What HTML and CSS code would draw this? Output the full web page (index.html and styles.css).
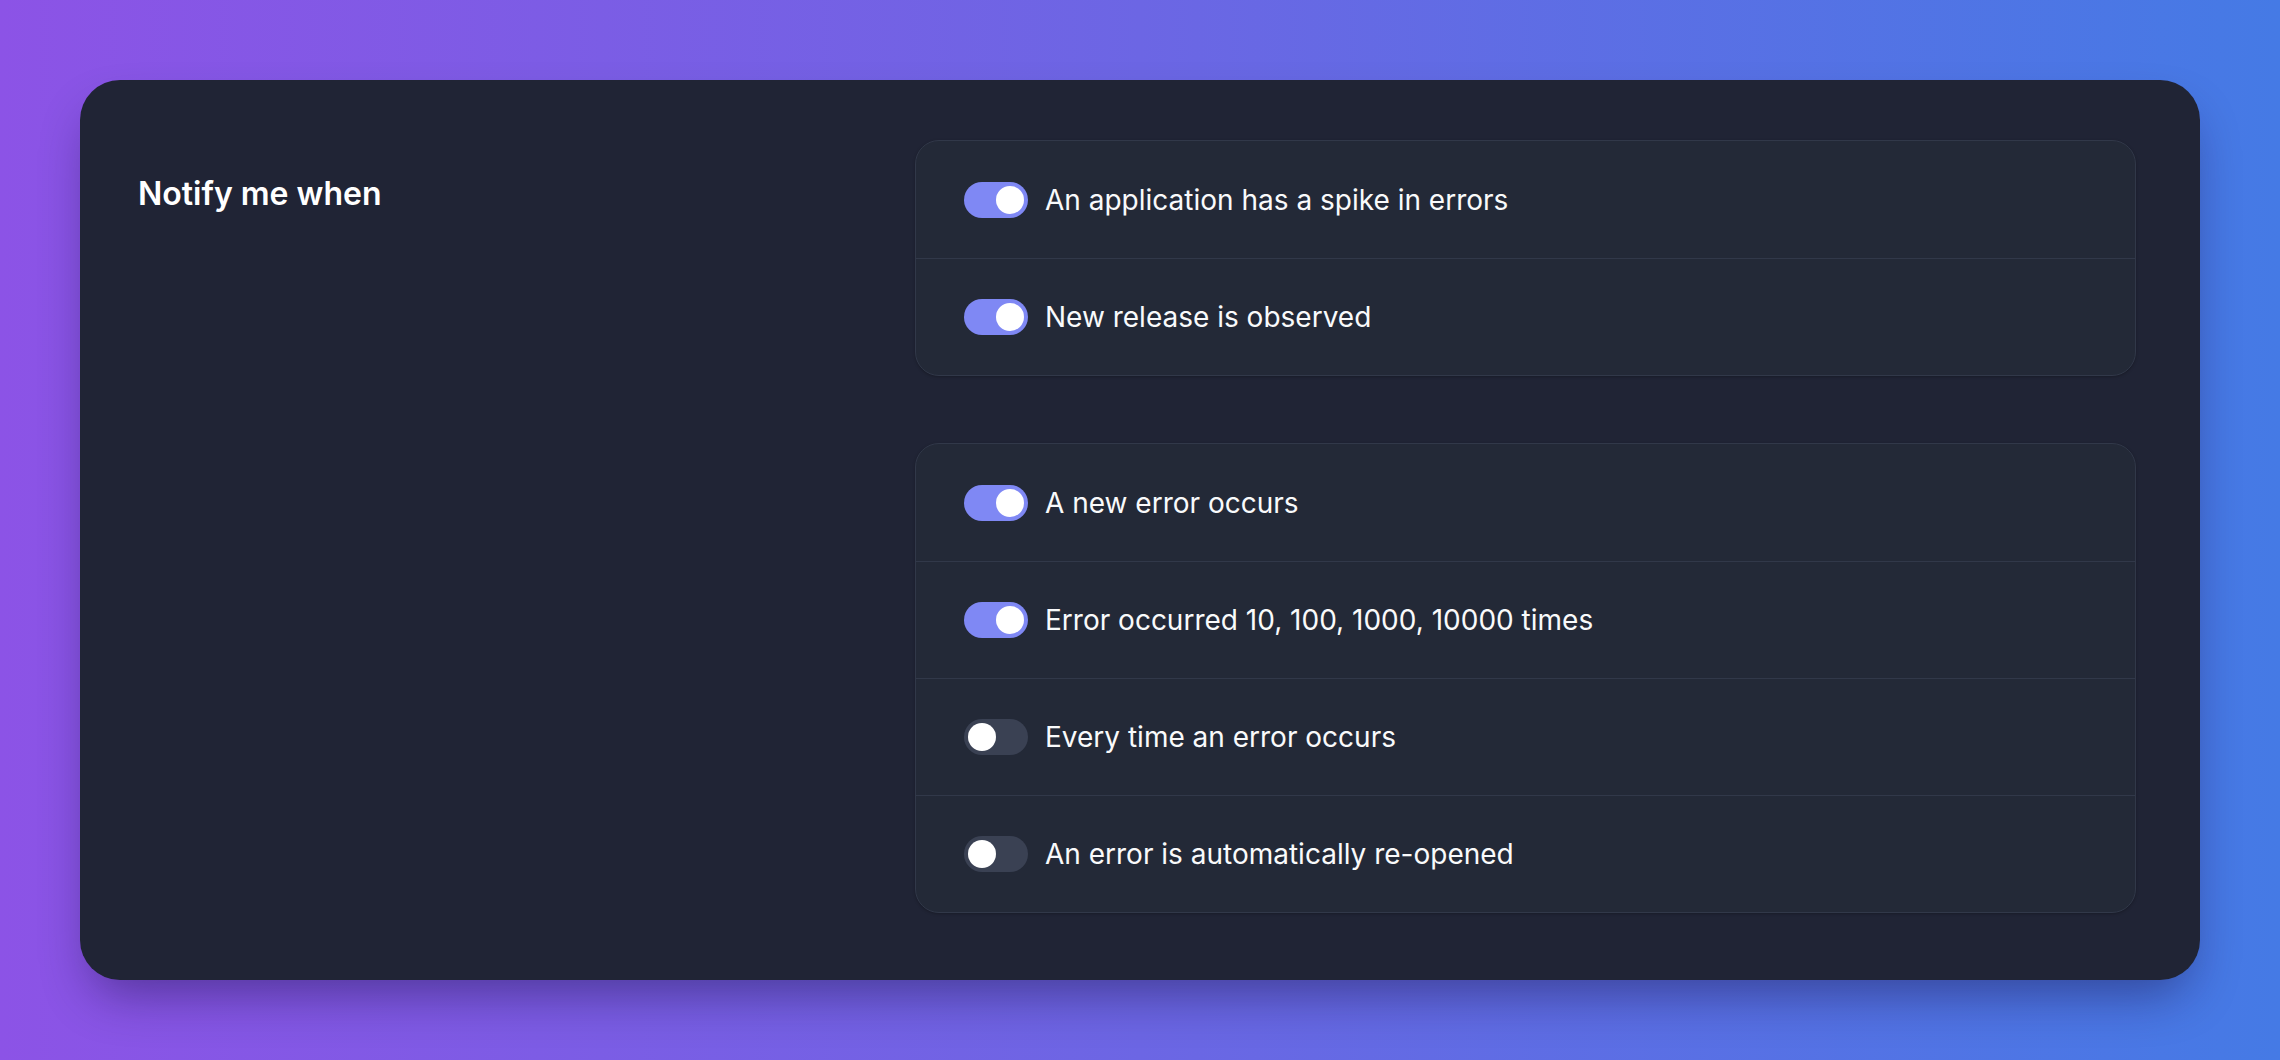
FILE: index.html
```html
<!DOCTYPE html>
<html>
<head>
  <title>Notifications</title>
  <meta name="viewport" content="width=device-width, initial-scale=1">
  <link rel="stylesheet" href="styles.css">
</head>
<body>
  <div class="page">
    <div class="card">
      <div class="card-title">
        <h2>Notify me when</h2>
      </div>
      <div class="groups">
        <section class="group">
          <div class="row">
            <span class="toggle on"><span class="knob"></span></span>
            <span class="label">An application has a spike in errors</span>
          </div>
          <div class="row">
            <span class="toggle on"><span class="knob"></span></span>
            <span class="label">New release is observed</span>
          </div>
        </section>

        <section class="group">
          <div class="row">
            <span class="toggle on"><span class="knob"></span></span>
            <span class="label">A new error occurs</span>
          </div>
          <div class="row">
            <span class="toggle on"><span class="knob"></span></span>
            <span class="label">Error occurred 10, 100, 1000, 10000 times</span>
          </div>
          <div class="row">
            <span class="toggle"><span class="knob"></span></span>
            <span class="label">Every time an error occurs</span>
          </div>
          <div class="row">
            <span class="toggle"><span class="knob"></span></span>
            <span class="label">An error is automatically re-opened</span>
          </div>
        </section>
      </div>
    </div>
  </div>
</body>
</html>
```

FILE: styles.css
```css
* {padding: 0; margin: 0; box-sizing: border-box;}
html {font-family: Inter, "Noto Sans", Arial, sans-serif;}

body {margin: 0;}

.page {
    height: 1060px;
    padding: 80px;
    background: linear-gradient(90deg, #8c53e6 0%, #6c66e4 50%, #457ae5 100%);
}

.card {
    height: 900px;
    display: flex;
    padding: 60px 64px 67px 58px;
    border-radius: 40px;
    background-color: #202435;
    box-shadow: 0 25px 50px -12px rgba(20, 10, 60, 0.45);
}

.card-title {width: 777px; flex-shrink: 0; padding-top: 34px;}

.card-title h2 {font-size: 32px; line-height: 40px; font-weight: 600; color: #ffffff;}

.groups {flex: 1; display: flex; flex-direction: column; gap: 67px;}

.group {
    border: 1px solid #313849;
    border-radius: 24px;
    background-color: #232937;
    box-shadow: 0 1px 3px rgba(0, 0, 0, 0.25);
}

.row {
    height: 117px;
    display: flex;
    align-items: center;
    gap: 17px;
    padding: 0 48px;
}

.row + .row {border-top: 1px solid #313849;}

.label {font-size: 28px; color: #f9fafb;}

.toggle {
    width: 64px;
    height: 36px;
    flex-shrink: 0;
    display: flex;
    align-items: center;
    padding: 0 4px;
    border-radius: 18px;
    background-color: #3a4153;
}

.toggle.on {background-color: #7f88f4; justify-content: flex-end;}

.knob {width: 28px; height: 28px; border-radius: 50%; background-color: #ffffff;}
```
